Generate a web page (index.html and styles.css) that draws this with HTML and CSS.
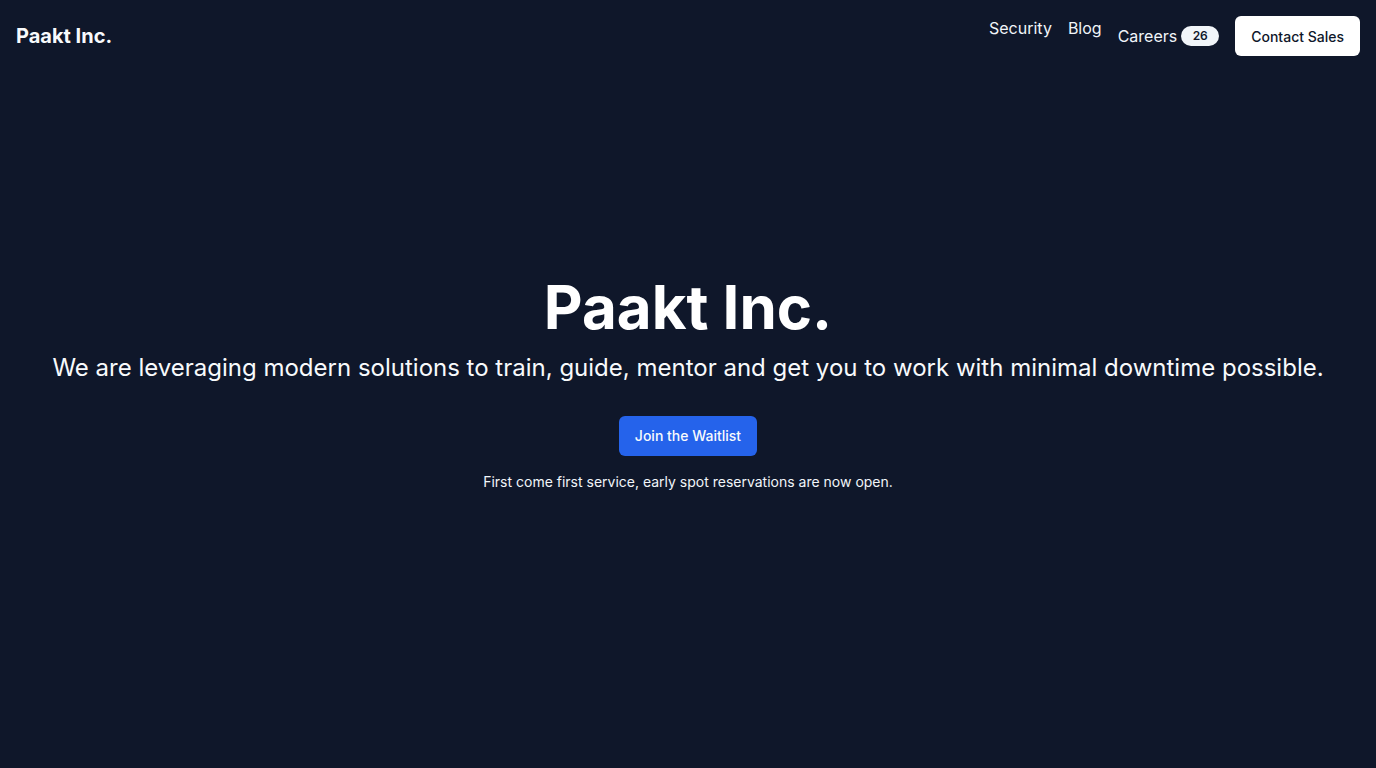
FILE: index.html
```html
<!DOCTYPE html>
<html lang="en">
<head>
<meta charset="utf-8">
<title>Paakt Inc.</title>
<link rel="stylesheet" href="styles.css">
</head>
<body>
<div class="page">
  <header class="header">
    <a class="logo" href="#">Paakt Inc.</a>
    <nav class="nav">
      <a class="nav-link" href="#">Security</a>
      <a class="nav-link" href="#">Blog</a>
      <a class="nav-careers" href="#">Careers <span class="badge">26</span></a>
      <a class="btn-contact" href="#">Contact Sales</a>
    </nav>
  </header>
  <main class="hero">
    <h1 class="title">Paakt Inc.</h1>
    <p class="subtitle">We are leveraging modern solutions to train, guide, mentor and get you to work with minimal downtime possible.</p>
    <a class="btn-primary" href="#">Join the Waitlist</a>
    <p class="note">First come first service, early spot reservations are now open.</p>
  </main>
</div>
</body>
</html>
```
FILE: styles.css
```css
* { box-sizing: border-box; }
html, body { margin: 0; padding: 0; }
body {
  background: #0f172a;
  color: #f8fafc;
  font-family: Inter, "Liberation Sans", sans-serif;
}
a { text-decoration: none; color: inherit; }
.page {
  display: grid;
  grid-template-areas: "stack";
  min-height: 100vh;
}
.header, .hero { grid-area: stack; }
.header {
  align-self: start;
  display: flex;
  justify-content: space-between;
  align-items: center;
  padding: 16px;
}
.logo {
  font-size: 20px;
  line-height: 28px;
  font-weight: 700;
  color: #f8fafc;
}
.nav {
  display: flex;
  gap: 16px;
  align-items: stretch;
}
.nav-link {
  font-size: 16px;
  line-height: 24px;
  color: #f1f5f9;
}
.nav-careers {
  display: flex;
  align-items: center;
  gap: 4px;
  font-size: 16px;
  line-height: 24px;
  color: #f1f5f9;
}
.badge {
  display: inline-flex;
  align-items: center;
  justify-content: center;
  width: 38px;
  height: 20px;
  border-radius: 10px;
  background: #f1f5f9;
  color: #0f172a;
  font-size: 12px;
  font-weight: 600;
}
.btn-contact {
  display: inline-flex;
  align-items: center;
  height: 40px;
  padding: 0 16px;
  background: #ffffff;
  color: #0f172a;
  border-radius: 6px;
  font-size: 14px;
  font-weight: 500;
}
.hero {
  align-self: center;
  display: flex;
  flex-direction: column;
  align-items: center;
  text-align: center;
}
.title {
  margin: 0;
  font-size: 60px;
  line-height: 60px;
  font-weight: 700;
  color: #ffffff;
}
.subtitle {
  margin: 15px 0 0;
  font-size: 24px;
  line-height: 32px;
  color: #f8fafc;
}
.btn-primary {
  margin-top: 32px;
  display: inline-flex;
  align-items: center;
  height: 40px;
  padding: 0 16px;
  background: #2563eb;
  color: #f8fafc;
  border-radius: 6px;
  font-size: 14px;
  font-weight: 500;
}
.note {
  margin: 16px 0 0;
  font-size: 14px;
  line-height: 20px;
  color: #f1f5f9;
}
```
